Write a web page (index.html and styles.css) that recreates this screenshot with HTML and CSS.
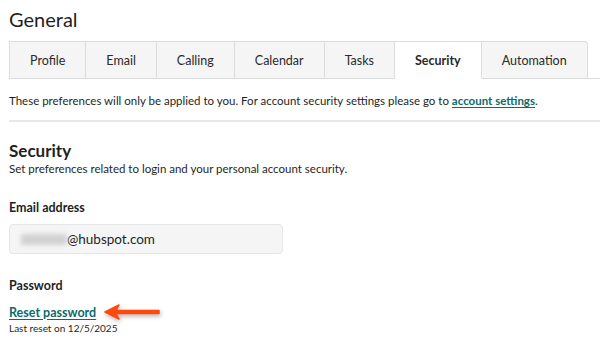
FILE: index.html
```html
<!DOCTYPE html>
<html lang="en">

<head>
    <meta charset="UTF-8">
    <meta name="viewport" content="width=device-width, initial-scale=1.0">
    <title>General settings</title>
    <link rel="stylesheet" href="styles.css">
</head>

<body>
    <div class="page">
        <h1 class="page-title">General</h1>

        <div class="tabs">
            <button class="tab">Profile</button>
            <button class="tab">Email</button>
            <button class="tab">Calling</button>
            <button class="tab">Calendar</button>
            <button class="tab">Tasks</button>
            <button class="tab active">Security</button>
            <button class="tab">Automation</button>
        </div>

        <p class="notice">These preferences will only be applied to you. For account security settings please go to <a href="#" class="link">account settings</a>.</p>

        <hr class="divider">

        <section class="section">
            <h2 class="section-title">Security</h2>
            <p class="section-desc">Set preferences related to login and your personal account security.</p>

            <div class="field">
                <label class="field-label">Email address</label>
                <div class="input">
                    <span class="blurred"></span>@hubspot.com
                </div>
            </div>

            <div class="field">
                <div class="field-label">Password</div>
                <div class="reset-row">
                    <a href="#" class="link">Reset password</a>
                    <!-- annotation arrow -->
                    <svg class="arrow" width="62" height="20" viewBox="0 0 62 20">
                        <path d="M3 10 L17 3 L14 8.5 L57 8.5 L57 11.5 L14 11.5 L17 17 Z" fill="#ff4a0f" stroke="#ff4a0f" stroke-width="1.5" stroke-linejoin="round" stroke-linecap="round" />
                    </svg>
                </div>
                <div class="hint">Last reset on 12/5/2025</div>
            </div>
        </section>
    </div>
</body>

</html>
```

FILE: styles.css
```css
:root {
    --text-color: #1f1f1f;
    --border-color: #dcdcdc;
    --tab-bg: #f5f5f5;
    --link-color: #0b6b6b;
}

* {
    margin: 0;
    padding: 0;
    box-sizing: border-box;
}

body {
    font-family: 'Lato', 'Noto Sans', sans-serif;
    color: var(--text-color);
    background: white;
}

.page {
    padding: 7px 0 0 9px;
}

.page-title {
    font-size: 20px;
    font-weight: 400;
    line-height: 24px;
    margin-bottom: 10px;
}

.tabs {
    display: flex;
    border-bottom: 1px solid var(--border-color);
}

.tab {
    height: 38px;
    font-family: inherit;
    font-size: 12.5px;
    color: #2a2a2a;
    background-color: var(--tab-bg);
    border: 1px solid var(--border-color);
    border-left: none;
    margin-bottom: -1px;
    padding: 0 20px;
    cursor: pointer;
}

.tab:first-child {
    border-left: 1px solid var(--border-color);
}

.tab:last-child {
    border-top-right-radius: 3px;
}

.tab.active {
    background-color: white;
    font-weight: 700;
    border-bottom-color: white;
}

.notice {
    font-size: 11.5px;
    line-height: 16px;
    margin-top: 14px;
}

.link {
    color: var(--link-color);
    font-weight: 700;
    text-decoration: underline;
    text-underline-offset: 2px;
}

.divider {
    border: none;
    border-top: 2px solid #e8e8e8;
    margin-top: 11px;
}

.section {
    padding-top: 19px;
}

.section-title {
    font-size: 17px;
    font-weight: 700;
    line-height: 20px;
}

.section-desc {
    font-size: 11.5px;
    line-height: 15px;
}

.field {
    margin-top: 24px;
}

.field-label {
    display: block;
    font-size: 12.5px;
    font-weight: 700;
    line-height: 16px;
}

.input {
    width: 274px;
    height: 30px;
    margin-top: 8px;
    background-color: #f5f5f5;
    border: 1px solid #e6e6e6;
    border-radius: 4px;
    display: flex;
    align-items: center;
    padding-left: 11px;
    font-size: 13.5px;
}

.blurred {
    width: 46px;
    height: 11px;
    background-color: #d2d2d2;
    filter: blur(2px);
}

.reset-row {
    display: flex;
    align-items: center;
    gap: 6px;
    margin-top: 8px;
}

.reset-row .link {
    font-size: 12.5px;
}

.arrow {
    filter: drop-shadow(1px 2px 2px rgba(0, 0, 0, 0.3));
}

.hint {
    font-size: 10px;
    line-height: 12px;
}
```
